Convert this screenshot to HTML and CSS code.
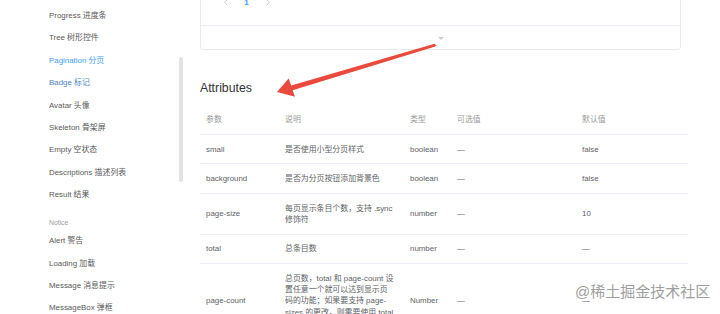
FILE: index.html
```html
<!DOCTYPE html>
<html lang="zh">
<head>
<meta charset="utf-8">
<title>Pagination 分页</title>
<link rel="stylesheet" href="styles.css">
</head>
<body>
<div class="page">
  <aside class="sidebar">
    <ul class="nav">
      <li class="nav-item">Progress 进度条</li>
      <li class="nav-item">Tree 树形控件</li>
      <li class="nav-item is-active">Pagination 分页</li>
      <li class="nav-item is-hover">Badge 标记</li>
      <li class="nav-item">Avatar 头像</li>
      <li class="nav-item">Skeleton 骨架屏</li>
      <li class="nav-item">Empty 空状态</li>
      <li class="nav-item">Descriptions 描述列表</li>
      <li class="nav-item">Result 结果</li>
      <li class="nav-group">Notice</li>
      <li class="nav-item">Alert 警告</li>
      <li class="nav-item">Loading 加载</li>
      <li class="nav-item">Message 消息提示</li>
      <li class="nav-item">MessageBox 弹框</li>
    </ul>
    <div class="scroll-thumb"></div>
  </aside>

  <main class="main">
    <section class="demo-card">
      <div class="demo-body">
        <div class="pager">
          <span class="pager-btn"><svg width="4" height="7" viewBox="0 0 4 7"><path d="M3.5 0.5 L0.8 3.5 L3.5 6.5" fill="none" stroke="#c0c4cc" stroke-width="0.9"/></svg></span>
          <span class="pager-btn is-current">1</span>
          <span class="pager-btn"><svg width="4" height="7" viewBox="0 0 4 7"><path d="M0.5 0.5 L3.2 3.5 L0.5 6.5" fill="none" stroke="#c0c4cc" stroke-width="0.9"/></svg></span>
        </div>
      </div>
      <div class="demo-control"><span class="caret"></span></div>
    </section>

    <h3 class="section-title">Attributes</h3>

    <table class="attr-table">
      <colgroup>
        <col class="c1"><col class="c2"><col class="c3"><col class="c4"><col class="c5">
      </colgroup>
      <thead>
        <tr><th>参数</th><th class="desc">说明</th><th>类型</th><th>可选值</th><th>默认值</th></tr>
      </thead>
      <tbody>
        <tr><td>small</td><td class="desc">是否使用小型分页样式</td><td>boolean</td><td>—</td><td>false</td></tr>
        <tr><td>background</td><td class="desc">是否为分页按钮添加背景色</td><td>boolean</td><td>—</td><td>false</td></tr>
        <tr><td>page-size</td><td class="desc">每页显示条目个数，支持 .sync 修饰符</td><td>number</td><td>—</td><td>10</td></tr>
        <tr><td>total</td><td class="desc">总条目数</td><td>number</td><td>—</td><td>—</td></tr>
        <tr><td>page-count</td><td class="desc">总页数，total 和 page-count 设置任意一个就可以达到显示页码的功能；如果要支持 page-sizes 的更改，则需要使用 total 属性</td><td>Number</td><td>—</td><td>—</td></tr>
      </tbody>
    </table>
  </main>
</div>

<svg class="annotation" width="720" height="314" viewBox="0 0 720 314">
  <polygon points="277,92 288.6,78.6 291.2,85.4 434.6,43.8 436.2,45.2 435.3,46.6 292.6,90.2 295,96.8" fill="#ea4a3d"/>
</svg>

<div class="watermark">@稀土掘金技术社区</div>
</body>
</html>
```

FILE: styles.css
```css
html, body {
  margin: 0;
  padding: 0;
  width: 720px;
  height: 314px;
  overflow: hidden;
  background: #fff;
}

body {
  font-family: "Liberation Sans", Arial, "Noto Sans CJK SC", sans-serif;
  color: #555;
  position: relative;
}

.page {
  display: flex;
  align-items: flex-start;
  gap: 10px;
}

/* Sidebar */
.sidebar {
  position: relative;
  width: 190px;
  flex: none;
  height: 314px;
}

.nav {
  list-style: none;
  margin: 0;
  padding: 5px 0 0 49px;
}

.nav-item {
  font-size: 7.9px;
  line-height: 22.4px;
  height: 22.4px;
  color: #5a5a5a;
  white-space: nowrap;
}

.nav-item.is-active {
  color: #409eff;
}

.nav-item.is-hover {
  color: #4d85c8;
}

.nav-group {
  font-size: 6.8px;
  line-height: 11px;
  padding: 10px 0 2.6px;
  color: #a0a0a0;
}

.scroll-thumb {
  position: absolute;
  left: 179px;
  top: 57px;
  width: 4px;
  height: 125px;
  border-radius: 2px;
  background: #e3e3e3;
}

/* Main */
.main {
  width: 488px;
  flex: none;
}

.demo-card {
  width: 479px;
  margin-top: -20px;
  border: 1px solid #ebebeb;
  border-radius: 3px;
}

.demo-body {
  padding: 13px 0 15px 14px;
}

.pager {
  display: flex;
  height: 16px;
  align-items: center;
}

.pager-btn {
  width: 21px;
  height: 16px;
  display: flex;
  align-items: center;
  justify-content: center;
  font-size: 8px;
  font-weight: bold;
  color: #606266;
}

.pager-btn.is-current {
  color: #409eff;
}

.demo-control {
  height: 23px;
  border-top: 1px solid #eaeefb;
  display: flex;
  align-items: center;
  justify-content: center;
}

.caret {
  width: 0;
  height: 0;
  border-left: 3px solid transparent;
  border-right: 3px solid transparent;
  border-top: 3.5px solid #c8ccd3;
  margin-left: 1px;
  margin-top: 1px;
}

.section-title {
  margin: 30px 0 9.5px;
  font-size: 12.3px;
  line-height: 16px;
  font-weight: normal;
  color: #333;
}

/* Table */
.attr-table {
  width: 488px;
  border-collapse: collapse;
  table-layout: fixed;
  font-size: 7.9px;
  line-height: 11.3px;
}

.c1 { width: 79px; }
.c2 { width: 125px; }
.c3 { width: 47px; }
.c4 { width: 125px; }
.c5 { width: 112px; }

.attr-table th,
.attr-table td {
  text-align: left;
  padding: 8.6px 6px;
  border-bottom: 1px solid #ebeef5;
  vertical-align: middle;
}

.attr-table .desc {
  padding-right: 9px;
}

.attr-table th {
  font-weight: normal;
  color: #9a9a9a;
}

.attr-table td {
  color: #606266;
}

/* Overlays */
.annotation {
  position: absolute;
  left: 0;
  top: 0;
  pointer-events: none;
}

.watermark {
  position: absolute;
  left: 575px;
  top: 283px;
  font-size: 15px;
  line-height: 18px;
  color: #9e9e9e;
  text-shadow: 0 0 2px #fff, 0 0 2px #fff;
  white-space: nowrap;
}
```
